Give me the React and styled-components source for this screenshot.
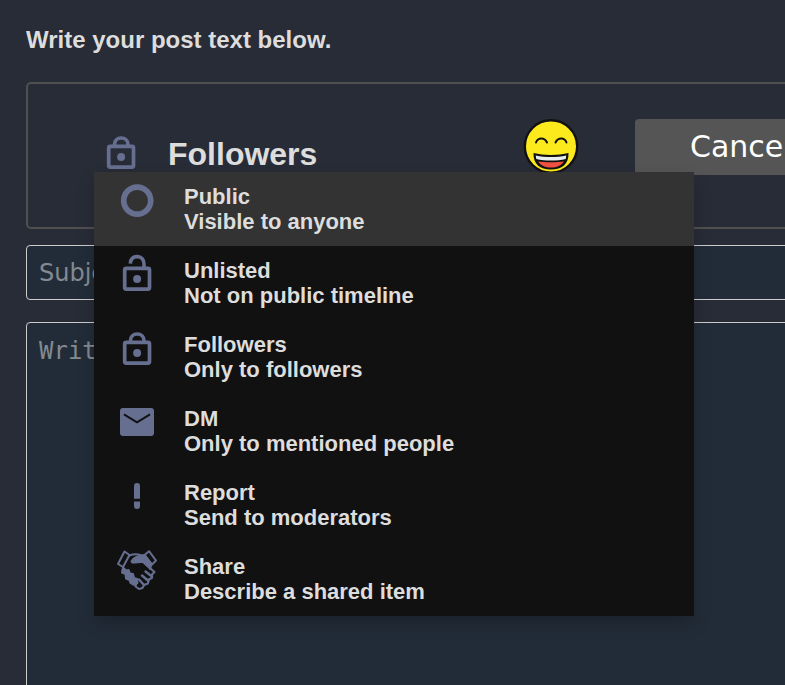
import React from "react";
import styled, { createGlobalStyle, css } from "styled-components";

const GlobalStyle = createGlobalStyle`
  *, *::before, *::after { box-sizing: border-box; }
  html, body { margin: 0; min-height: 100%; }
  body {
    background: #282c37;
    color: #dddddd;
    font-family: "Liberation Sans", Arial, sans-serif;
    overflow: hidden;
  }
`;

const Page = styled.main`
  display: flex;
  flex-direction: column;
  min-width: 960px;
  min-height: 100vh;
  padding: 26px 26px 0;
`;

const Prompt = styled.h1`
  margin: 0 0 28px;
  font-size: 24px;
  line-height: 28px;
`;

const Form = styled.form`
  display: flex;
  flex: 1;
  flex-direction: column;
`;

const Toolbar = styled.div`
  display: flex;
  align-items: flex-start;
  height: 147px;
  margin-bottom: 16px;
  padding: 35px 66px;
  border: 2px solid #505050;
  border-radius: 5px;
`;

const Scope = styled.div`
  position: relative;
  flex: 0 0 429px;
`;

const ScopeButton = styled.button`
  display: flex;
  align-items: flex-start;
  gap: 27px;
  height: 53px;
  padding: 13px 7px 0;
  border: 0;
  background: none;
  color: inherit;
  font: bold 32px/44px "Liberation Sans", Arial, sans-serif;
  cursor: pointer;
`;

const Menu = styled.ul`
  position: absolute;
  top: 100%;
  left: 0;
  z-index: 1;
  width: 600px;
  margin: 0;
  padding: 0;
  background: #111111;
  box-shadow: 0 8px 16px rgba(0, 0, 0, 0.2);
  list-style: none;
`;

const MenuButton = styled.button`
  display: flex;
  gap: 27px;
  width: 100%;
  padding: 8px 23px;
  height: 74px;
  border: 0;
  background: ${(p) => (p.$active ? "#333333" : "transparent")};
  color: inherit;
  font: bold 22px/25px "Liberation Sans", Arial, sans-serif;
  text-align: left;
  cursor: pointer;
`;

const MenuText = styled.span`
  display: block;
  padding-top: 4px;
`;

const Line = styled.span`
  display: block;
`;

const Icon = styled.svg`
  display: block;
  flex: none;
  width: 40px;
  height: 40px;
  color: #666f90;
`;

const EmojiButton = styled.button`
  flex: none;
  margin-right: 56px;
  padding: 0;
  border: 0;
  background: none;
  cursor: pointer;
`;

const Emoji = styled.svg`
  display: block;
  width: 56px;
  height: 56px;
`;

const CancelButton = styled.button`
  flex: none;
  height: 56px;
  padding: 0 55px;
  border: 0;
  border-radius: 4px;
  background: #555555;
  color: #ffffff;
  font: 30px/56px "DejaVu Sans", sans-serif;
  cursor: pointer;
`;

const field = css`
  display: block;
  width: 100%;
  border: 1px solid #cccccc;
  border-radius: 4px;
  background: #222c38;
  color: #dddddd;
  outline: 0;
  &::placeholder { color: #838a91; opacity: 1; }
`;

const Subject = styled.input`
  ${field}
  height: 55px;
  margin-bottom: 22px;
  padding: 0 12px;
  font: 24px/28px "DejaVu Sans", sans-serif;
`;

const Message = styled.textarea`
  ${field}
  flex: 1;
  min-height: 400px;
  padding: 14px 12px;
  font: 24px/28px "DejaVu Sans Mono", monospace;
  resize: none;
`;

const LockBody = () => (
  <>
    <rect x="7.7" y="14.3" width="24.800" height="20.800" rx="1.500" fill="none" stroke="currentColor" strokeWidth="3.700" />
    <circle cx="20.100" cy="25" r="4" fill="currentColor" />
  </>
);

const icons = {
  public: <circle cx="20.2" cy="20.6" r="13.500" fill="none" stroke="currentColor" strokeWidth="5.700" />,
  unlisted: (
    <>
      <LockBody />
      <path d="M13.300 9.600C13.600 5.200 16.200 2.600 20.200 2.600C24.600 2.600 27 5.600 27 10V14" fill="none" stroke="currentColor" strokeWidth="3.600" />
    </>
  ),
  followers: (
    <>
      <LockBody />
      <path d="M13.500 14V12.500C13.500 8.500 16.200 6 20.200 6S27 8.500 27 12.500V14" fill="none" stroke="currentColor" strokeWidth="3.600" />
    </>
  ),
  dm: (
    <>
      <rect x="3" y="6" width="34" height="28" rx="3" fill="currentColor" />
      <path d="M7 12.300L20 20.300L33 12.300" fill="none" stroke="#111111" strokeWidth="2" />
    </>
  ),
  report: (
    <path d="M17 10a3 3 0 0 1 6 0V22.700H17ZM17 25.500H23V30a3 3 0 0 1-6 0Z" fill="currentColor" />
  ),
  share: (
    <g stroke="currentColor" strokeWidth="2" strokeLinejoin="round" strokeLinecap="round" fill="none">
      <path d="M7.500 1.500L12.500 5L6 17L1 14Z" />
      <path d="M27.500 5L32 1.200L39 10.500L35 14.500Z" />
      <path d="M12.500 5.500C16 4 20 4 23.500 5L28 5.500L34.500 14L33 19" />
      <path d="M14.500 11.500C16 8 21 5.500 28 5.500L34 14L32.500 18L26 12C22 11.500 19 13 15.500 12.500Z" fill="currentColor" />
      <path d="M6 17.500L9 20.500L11.500 20L13 23.500L16 24L17 28L20 29L20.500 33L17 35L13.500 33L12.500 30L9 28.500L8.500 24L5 22.500Z" fill="currentColor" />
      <path d="M20 31.500L18.500 36.500L22 39L25.500 38L27 35L31 33.500L31.500 29.500L35 28L35 24.500L37.500 22L33 18" />
      <path d="M22 29.500L27 35M25 25.500L31.500 31M28.500 21.500L35 26.500" strokeWidth="2.400" />
    </g>
  ),
};

const options = [
  { id: "public", name: "Public", note: "Visible to anyone" },
  { id: "unlisted", name: "Unlisted", note: "Not on public timeline" },
  { id: "followers", name: "Followers", note: "Only to followers" },
  { id: "dm", name: "DM", note: "Only to mentioned people" },
  { id: "report", name: "Report", note: "Send to moderators" },
  { id: "share", name: "Share", note: "Describe a shared item" },
];

const ScopeIcon = ({ name }) => (
  <Icon viewBox="0 0 40 40" aria-hidden="true">{icons[name]}</Icon>
);

const LaughingFace = () => (
  <Emoji viewBox="0 0 56 56" aria-hidden="true">
    <circle cx="28" cy="27.500" r="26.200" fill="#fdea1d" stroke="#111111" strokeWidth="2.400" />
    <path d="M13 23.500C15 18.200 21.500 18.200 24 23.500M32.500 23.500C35 18.200 41.500 18.200 43.500 23.500" fill="none" stroke="#111111" strokeWidth="2" strokeLinecap="round" />
    <path d="M10.500 34C21 36.500 35 36.500 45.500 34C46 45 39 50.500 28 50.500S10 45 10.500 34Z" fill="#111111" />
    <path d="M12.700 36.500C22 38.500 34 38.500 43.300 36.500L42.700 40C34 42 22 42 13.300 40Z" fill="#e8eeee" />
    <path d="M15 42.500C22 43.500 34 43.500 41 42.500C38 46.500 34 48.500 28 48.500S18 46.500 15 42.500Z" fill="#ef5143" />
  </Emoji>
);

export default function App() {
  return (
    <>
      <GlobalStyle />
      <Page>
        <Prompt>Write your post text below.</Prompt>
        <Form onSubmit={(e) => e.preventDefault()}>
          <Toolbar>
            <Scope>
              <ScopeButton type="button" aria-haspopup="true" aria-expanded="true">
                <ScopeIcon name="followers" />
                Followers
              </ScopeButton>
              <Menu>
                {options.map((o, i) => (
                  <li key={o.id}>
                    <MenuButton type="button" $active={i === 0}>
                      <ScopeIcon name={o.id} />
                      <MenuText>
                        <Line>{o.name}</Line>
                        <Line>{o.note}</Line>
                      </MenuText>
                    </MenuButton>
                  </li>
                ))}
              </Menu>
            </Scope>
            <EmojiButton type="button" aria-label="Emoji">
              <LaughingFace />
            </EmojiButton>
            <CancelButton type="button">Cancel</CancelButton>
          </Toolbar>
          <Subject type="text" aria-label="Subject" placeholder="Subject" />
          <Message aria-label="Post text" placeholder="Write something" />
        </Form>
      </Page>
    </>
  );
}
